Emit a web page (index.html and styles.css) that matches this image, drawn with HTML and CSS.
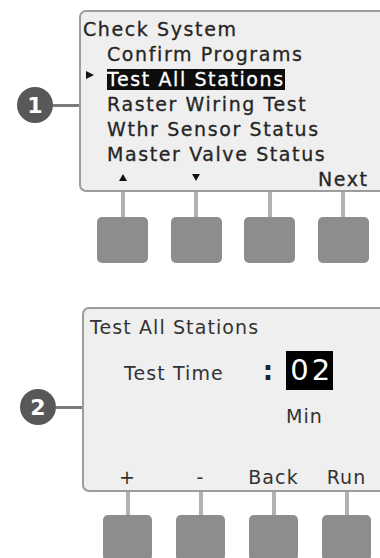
FILE: index.html
```html
<!DOCTYPE html>
<html lang="en">
<head>
    <meta charset="UTF-8">
    <title>Check System</title>
    <link rel="stylesheet" href="styles.css">
</head>
<body>
    <div class="unit unit-one">
        <div class="display-row">
            <div class="callout">
                <span class="badge">1</span><span class="lead"></span>
            </div>
            <div class="screen screen-menu">
                <div class="title">Check System</div>
                <div class="item"><span class="marker"></span>Confirm Programs</div>
                <div class="item"><span class="marker on"></span><span class="hl">Test All Stations</span></div>
                <div class="item"><span class="marker"></span>Raster Wiring Test</div>
                <div class="item"><span class="marker"></span>Wthr Sensor Status</div>
                <div class="item"><span class="marker"></span>Master Valve Status</div>
                <div class="softkeys">
                    <span><i class="tri up"></i></span>
                    <span><i class="tri down"></i></span>
                    <span></span>
                    <span>Next</span>
                </div>
            </div>
        </div>
        <div class="keys">
            <div class="key-col"><span class="stem"></span><span class="key"></span></div>
            <div class="key-col"><span class="stem"></span><span class="key"></span></div>
            <div class="key-col"><span class="stem"></span><span class="key"></span></div>
            <div class="key-col"><span class="stem"></span><span class="key"></span></div>
        </div>
    </div>

    <div class="unit unit-two">
        <div class="display-row">
            <div class="callout">
                <span class="badge">2</span><span class="lead"></span>
            </div>
            <div class="screen screen-test">
                <div class="title">Test All Stations</div>
                <div class="time-row">
                    <span class="label">Test Time</span>
                    <span class="colon">:</span>
                    <span class="value">02</span>
                </div>
                <div class="unit-label">Min</div>
                <div class="softkeys">
                    <span>+</span>
                    <span>-</span>
                    <span>Back</span>
                    <span>Run</span>
                </div>
            </div>
        </div>
        <div class="keys">
            <div class="key-col"><span class="stem"></span><span class="key"></span></div>
            <div class="key-col"><span class="stem"></span><span class="key"></span></div>
            <div class="key-col"><span class="stem"></span><span class="key"></span></div>
            <div class="key-col"><span class="stem"></span><span class="key"></span></div>
        </div>
    </div>
</body>
</html>
```

FILE: styles.css
```css
html, body{
    margin: 0;
    background: #fff;
}
body{
    width: 380px;
    height: 558px;
    overflow: hidden;
    font-family: "DejaVu Sans", sans-serif;
}

.unit-one{
    padding: 10px 0 0 17px;
}
.unit-two{
    padding: 44px 0 0 20px;
}

.display-row{
    display: flex;
}
.callout{
    display: flex;
    align-items: center;
    flex: none;
    height: 36px;
}
.unit-one .callout{
    margin-top: 77px;
}
.unit-two .callout{
    margin-top: 82px;
}
.badge{
    width: 36px;
    height: 36px;
    border-radius: 50%;
    background: #585858;
    color: #fff;
    font-weight: bold;
    font-size: 22px;
    display: flex;
    align-items: center;
    justify-content: center;
}
.lead{
    width: 26px;
    height: 3px;
    background: #7a7a7a;
}

/* the right side of each display is cut off by the frame */
.screen{
    flex: 1;
    min-width: 0;
    box-sizing: border-box;
    border: 2px solid #9c9c9c;
    border-right: none;
    border-radius: 7px 0 0 7px;
    background: #efefef;
    display: flex;
    flex-direction: column;
    white-space: nowrap;
}

.screen-menu{
    height: 182px;
    padding: 5px 0 0 2px;
    font-size: 19px;
    line-height: 25px;
    letter-spacing: 1.6px;
    color: #262626;
    -webkit-text-stroke: 0.3px #262626;
    .item{
        display: flex;
        align-items: center;
    }
    .marker{
        width: 24px;
        height: 25px;
        flex: none;
        position: relative;
    }
    .marker.on::after{
        content: "";
        position: absolute;
        left: 3px;
        top: 4px;
        border-top: 4px solid transparent;
        border-bottom: 4px solid transparent;
        border-left: 8px solid #111;
    }
    .hl{
        background: #0d0d0d;
        color: #fff;
        -webkit-text-stroke: 0.3px #fff;
        line-height: 21px;
    }
    .softkeys{
        margin-left: 3px;
    }
}

.softkeys{
    display: grid;
    grid-template-columns: repeat(4, 73.5px);
    justify-items: center;
    margin-top: auto;
}
.tri{
    display: inline-block;
    width: 0;
    height: 0;
    border-left: 4px solid transparent;
    border-right: 4px solid transparent;
    vertical-align: 5px;
}
.tri.up{
    border-bottom: 7px solid #111;
}
.tri.down{
    border-top: 7px solid #111;
}

.screen-test{
    height: 185px;
    padding: 6px 0 0 6px;
    font-size: 19px;
    line-height: 25px;
    letter-spacing: 1.1px;
    color: #333;
    .time-row{
        display: flex;
        align-items: baseline;
        margin-top: 11px;
        padding-left: 34px;
    }
    .colon{
        font-size: 26px;
        font-weight: bold;
        margin-left: 39px;
        color: #222;
    }
    .value{
        display: inline-block;
        margin-left: 12px;
        padding-left: 4px;
        background: #000;
        color: #fff;
        font-size: 29px;
        line-height: 39px;
        letter-spacing: 3px;
    }
    .unit-label{
        margin-top: 14px;
        padding-left: 196px;
    }
    .softkeys{
        margin-left: 1px;
        grid-template-columns: repeat(4, 73px);
    }
}

.keys{
    display: grid;
    grid-template-columns: repeat(4, 73.5px);
    margin-left: 69px;
}
.unit-two .keys{
    grid-template-columns: repeat(4, 73px);
    margin-left: 71px;
}
.key-col{
    display: flex;
    flex-direction: column;
    align-items: center;
}
.stem{
    width: 4px;
    height: 25px;
    background: #b2b2b2;
}
.unit-two .stem{
    height: 23px;
}
.key{
    width: 51px;
    height: 46px;
    border-radius: 5px;
    background: #8d8d8d;
}
.unit-two .key{
    width: 49px;
}
```
